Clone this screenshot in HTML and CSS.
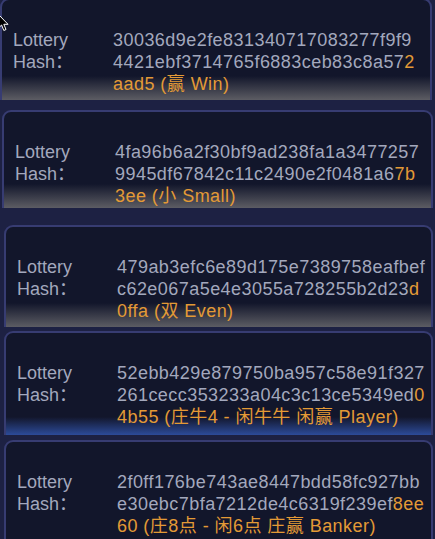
FILE: index.html
```html
<!DOCTYPE html>
<html lang="zh">
<head>
<meta charset="utf-8">
<link rel="stylesheet" href="styles.css">
</head>
<body>
<div class="stack">
  <div class="card card-1">
    <div class="row">
      <div class="label">Lottery Hash：</div>
      <div class="hash">
        <span class="line">30036d9e2fe831340717083277f9f9</span>
        <span class="line">4421ebf3714765f6883ceb83c8a57<span class="hl">2</span></span>
        <span class="line hl">aad5 (赢 Win)</span>
      </div>
    </div>
  </div>
  <div class="card card-2">
    <div class="row">
      <div class="label">Lottery Hash：</div>
      <div class="hash">
        <span class="line">4fa96b6a2f30bf9ad238fa1a3477257</span>
        <span class="line">9945df67842c11c2490e2f0481a6<span class="hl">7b</span></span>
        <span class="line hl">3ee (小 Small)</span>
      </div>
    </div>
  </div>
  <div class="card card-3">
    <div class="row">
      <div class="label">Lottery Hash：</div>
      <div class="hash">
        <span class="line">479ab3efc6e89d175e7389758eafbef</span>
        <span class="line">c62e067a5e4e3055a728255b2d23<span class="hl">d</span></span>
        <span class="line hl">0ffa (双 Even)</span>
      </div>
    </div>
  </div>
  <div class="card card-4 blue">
    <div class="row">
      <div class="label">Lottery Hash：</div>
      <div class="hash">
        <span class="line">52ebb429e879750ba957c58e91f327</span>
        <span class="line">261cecc353233a04c3c13ce5349ed<span class="hl">0</span></span>
        <span class="line hl">4b55 (庄牛4 - 闲牛牛 闲赢 Player)</span>
      </div>
    </div>
  </div>
  <div class="card card-5 open">
    <div class="row">
      <div class="label">Lottery Hash：</div>
      <div class="hash">
        <span class="line">2f0ff176be743ae8447bdd58fc927bb</span>
        <span class="line">e30ebc7bfa7212de4c6319f239ef<span class="hl">8ee</span></span>
        <span class="line hl">60 (庄8点 - 闲6点 庄赢 Banker)</span>
      </div>
    </div>
  </div>
</div>
<svg class="cursor" width="12" height="18" viewBox="0 0 12 18"><path d="M0.5 0.5 L0.5 14 L3.6 11 L5.8 16.5 L8 15.5 L5.8 10.3 L10 10.3 Z" fill="#000" stroke="#fff" stroke-width="1"/></svg>
</body>
</html>
```

FILE: styles.css
```css
html, body {
  margin: 0;
  padding: 0;
}
body {
  background: #1d2143;
  width: 435px;
  height: 539px;
  overflow: hidden;
  position: relative;
  font-family: "Liberation Sans", "Noto Sans CJK SC", sans-serif;
}
.stack {
  display: flex;
  flex-direction: column;
}
.card {
  position: relative;
  box-sizing: border-box;
  background: #12162b;
  border: 2px solid #373c72;
  border-bottom: none;
  border-radius: 9px 9px 0 0;
  padding: 29px 10px 0 11px;
  overflow: hidden;
}
.card::after {
  content: "";
  position: absolute;
  left: 0;
  right: 0;
  bottom: 0;
  height: 24px;
  background: linear-gradient(to bottom, rgba(18, 22, 43, 0), rgba(96, 96, 102, 0.95));
}
.card.blue::after {
  height: 18px;
  background: linear-gradient(to bottom, rgba(18, 22, 43, 0), rgba(46, 78, 160, 0.95));
}
.card.open::after {
  display: none;
}
.card-1 { margin: -2px 3px 0 0; height: 102px; }
.card-2 { margin: 10px 2px 0 2px; height: 98px; }
.card-3 { margin: 17px 2px 0 4px; height: 102px; }
.card-4 { margin: 4px 2px 0 4px; height: 104px; }
.card-5 { margin: 5px 2px 0 4px; height: 130px; }
.row {
  position: relative;
  z-index: 1;
  display: flex;
  font-size: 18px;
  line-height: 22px;
  color: #a3a8bd;
}
.label {
  width: 100px;
  flex: none;
}
.hash {
  flex: 1;
  letter-spacing: 0.45px;
  white-space: nowrap;
}
.line {
  display: block;
}
.hl {
  color: #e39a36;
}
.cursor {
  position: absolute;
  left: -2px;
  top: 14px;
}
```
